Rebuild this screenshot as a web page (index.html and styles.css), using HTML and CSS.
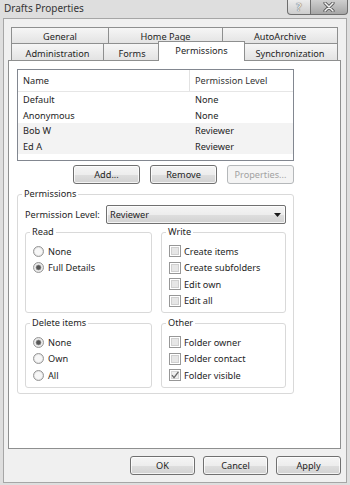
FILE: index.html
```html
<!DOCTYPE html>
<html lang="en">
<head>
    <meta charset="UTF-8">
    <title>Drafts Properties</title>
    <link rel="stylesheet" href="styles.css">
</head>
<body>
    <div class="window">
        <div class="titlebar">
            <span class="title">Drafts Properties</span>
            <div class="caption">
                <span class="cap-btn help">?</span>
                <span class="cap-btn close">
                    <svg width="12" height="10" viewBox="0 0 12 10">
                        <path d="M2 1 L10 9 M10 1 L2 9" stroke="#5a5a5a" stroke-width="3.2" stroke-linecap="round"/>
                        <path d="M2 1 L10 9 M10 1 L2 9" stroke="#f4f4f4" stroke-width="1.5" stroke-linecap="round"/>
                    </svg>
                </span>
            </div>
        </div>

        <div class="client">
            <div class="tabs">
                <div class="tab-row back">
                    <div class="tab t-general">General</div>
                    <div class="tab t-home">Home Page</div>
                    <div class="tab t-archive">AutoArchive</div>
                </div>
                <div class="tab-row front">
                    <div class="tab t-admin">Administration</div>
                    <div class="tab t-forms">Forms</div>
                    <div class="tab active">Permissions</div>
                    <div class="tab t-sync">Synchronization</div>
                </div>
            </div>

            <div class="panel">
                <div class="listbox">
                    <div class="list-head">
                        <span class="col-name">Name</span>
                        <span class="col-level">Permission Level</span>
                    </div>
                    <div class="list-row"><span class="col-name">Default</span><span class="col-level">None</span></div>
                    <div class="list-row"><span class="col-name">Anonymous</span><span class="col-level">None</span></div>
                    <div class="list-row alt"><span class="col-name">Bob W</span><span class="col-level">Reviewer</span></div>
                    <div class="list-row alt"><span class="col-name">Ed A</span><span class="col-level">Reviewer</span></div>
                </div>

                <div class="list-buttons">
                    <button class="btn">Add...</button>
                    <button class="btn">Remove</button>
                    <button class="btn" disabled>Properties...</button>
                </div>

                <fieldset class="group perms">
                    <legend>Permissions</legend>
                    <div class="level-row">
                        <label>Permission Level:</label>
                        <div class="combo">
                            <span>Reviewer</span>
                            <svg width="7" height="4" viewBox="0 0 7 4"><path d="M0 0 H7 L3.5 4 Z" fill="#1a1a1a"/></svg>
                        </div>
                    </div>

                    <div class="group-row">
                        <fieldset class="group sub left">
                            <legend>Read</legend>
                            <div class="option">
                                <svg class="radio" width="11" height="11" viewBox="0 0 11 11"><circle cx="5.5" cy="5.5" r="5" fill="#e4e4e4" stroke="#979797"/><circle cx="5.5" cy="5.5" r="3.6" fill="#f7f7f7"/></svg>
                                <span>None</span>
                            </div>
                            <div class="option">
                                <svg class="radio" width="11" height="11" viewBox="0 0 11 11"><circle cx="5.5" cy="5.5" r="5" fill="#e4e4e4" stroke="#979797"/><circle cx="5.5" cy="5.5" r="3.6" fill="#f7f7f7"/><circle cx="5.5" cy="5.5" r="2.5" fill="#555" stroke="#8a8a8a" stroke-width="0.8"/></svg>
                                <span>Full Details</span>
                            </div>
                        </fieldset>
                        <fieldset class="group sub right">
                            <legend>Write</legend>
                            <div class="option check">
                                <svg width="12" height="12" viewBox="0 0 12 12"><rect x="0.5" y="0.5" width="11" height="11" fill="#fff" stroke="#979797"/><rect x="2.5" y="2.5" width="7" height="7" fill="#e6e6e6" stroke="#cfcfcf"/></svg>
                                <span>Create items</span>
                            </div>
                            <div class="option check">
                                <svg width="12" height="12" viewBox="0 0 12 12"><rect x="0.5" y="0.5" width="11" height="11" fill="#fff" stroke="#979797"/><rect x="2.5" y="2.5" width="7" height="7" fill="#e6e6e6" stroke="#cfcfcf"/></svg>
                                <span>Create subfolders</span>
                            </div>
                            <div class="option check">
                                <svg width="12" height="12" viewBox="0 0 12 12"><rect x="0.5" y="0.5" width="11" height="11" fill="#fff" stroke="#979797"/><rect x="2.5" y="2.5" width="7" height="7" fill="#e6e6e6" stroke="#cfcfcf"/></svg>
                                <span>Edit own</span>
                            </div>
                            <div class="option check">
                                <svg width="12" height="12" viewBox="0 0 12 12"><rect x="0.5" y="0.5" width="11" height="11" fill="#fff" stroke="#979797"/><rect x="2.5" y="2.5" width="7" height="7" fill="#e6e6e6" stroke="#cfcfcf"/></svg>
                                <span>Edit all</span>
                            </div>
                        </fieldset>
                    </div>

                    <div class="group-row">
                        <fieldset class="group sub left">
                            <legend>Delete items</legend>
                            <div class="option">
                                <svg class="radio" width="11" height="11" viewBox="0 0 11 11"><circle cx="5.5" cy="5.5" r="5" fill="#e4e4e4" stroke="#979797"/><circle cx="5.5" cy="5.5" r="3.6" fill="#f7f7f7"/><circle cx="5.5" cy="5.5" r="2.5" fill="#555" stroke="#8a8a8a" stroke-width="0.8"/></svg>
                                <span>None</span>
                            </div>
                            <div class="option">
                                <svg class="radio" width="11" height="11" viewBox="0 0 11 11"><circle cx="5.5" cy="5.5" r="5" fill="#e4e4e4" stroke="#979797"/><circle cx="5.5" cy="5.5" r="3.6" fill="#f7f7f7"/></svg>
                                <span>Own</span>
                            </div>
                            <div class="option">
                                <svg class="radio" width="11" height="11" viewBox="0 0 11 11"><circle cx="5.5" cy="5.5" r="5" fill="#e4e4e4" stroke="#979797"/><circle cx="5.5" cy="5.5" r="3.6" fill="#f7f7f7"/></svg>
                                <span>All</span>
                            </div>
                        </fieldset>
                        <fieldset class="group sub right">
                            <legend>Other</legend>
                            <div class="option check">
                                <svg width="12" height="12" viewBox="0 0 12 12"><rect x="0.5" y="0.5" width="11" height="11" fill="#fff" stroke="#979797"/><rect x="2.5" y="2.5" width="7" height="7" fill="#e6e6e6" stroke="#cfcfcf"/></svg>
                                <span>Folder owner</span>
                            </div>
                            <div class="option check">
                                <svg width="12" height="12" viewBox="0 0 12 12"><rect x="0.5" y="0.5" width="11" height="11" fill="#fff" stroke="#979797"/><rect x="2.5" y="2.5" width="7" height="7" fill="#e6e6e6" stroke="#cfcfcf"/></svg>
                                <span>Folder contact</span>
                            </div>
                            <div class="option check">
                                <svg width="12" height="12" viewBox="0 0 12 12"><rect x="0.5" y="0.5" width="11" height="11" fill="#fff" stroke="#979797"/><rect x="2.5" y="2.5" width="7" height="7" fill="#f0f0f0" stroke="#d8d8d8"/><path d="M3 6.2 L5 8.6 L9.4 2.8" fill="none" stroke="#6a6a6a" stroke-width="1.3"/></svg>
                                <span>Folder visible</span>
                            </div>
                        </fieldset>
                    </div>
                </fieldset>
            </div>

            <div class="dialog-buttons">
                <button class="btn">OK</button>
                <button class="btn">Cancel</button>
                <button class="btn">Apply</button>
            </div>
        </div>
    </div>
</body>
</html>
```

FILE: styles.css
```css
* {
    box-sizing: border-box;
}
body {
    margin: 0;
    width: 350px;
    height: 485px;
    overflow: hidden;
    background: #fff;
    font-family: "Noto Sans", "Open Sans", sans-serif;
    font-size: 9.2px;
    color: #1e1e1e;
}
.window {
    width: 350px;
    height: 485px;
    background: #dedede;
    padding: 0 3px 2px 3px;
    display: flex;
    flex-direction: column;
}
.titlebar {
    height: 18px;
    display: flex;
    justify-content: space-between;
    align-items: flex-start;
}
.title {
    padding: 1px 0 0 1px;
    font-size: 10px;
    line-height: 15px;
    color: #353535;
}
.caption {
    display: flex;
    margin-right: -1px;
}
.cap-btn {
    height: 15px;
    border: 1px solid #6e6e6e;
    border-top: none;
    display: flex;
    align-items: center;
    justify-content: center;
}
.help {
    width: 24px;
    border-radius: 0 0 0 4px;
    background: linear-gradient(#ececec, #cdcdcd);
    font-size: 10px;
    font-weight: bold;
    color: #e6e6e6;
    text-shadow: 0 0 1px #666, 0 0 1px #666;
}
.close {
    width: 38px;
    margin-left: -1px;
    border-radius: 0 0 4px 0;
    background: linear-gradient(#cfcfcf, #a6a6a6);
}
.client {
    flex: 1;
    background: #f0f0f0;
    border: 1px solid #a6a6a6;
    padding: 8px 0 0 4px;
}
.tabs {
    width: 333px;
    display: flex;
    flex-direction: column;
}
.tab-row {
    display: flex;
    padding: 0 3px;
}
.tab {
    border: 1px solid #8e8f8f;
    border-bottom: none;
    margin-left: -1px;
    background: linear-gradient(#f6f6f6, #e3e3e3);
    text-align: center;
    white-space: nowrap;
}
.tab:first-child {
    margin-left: 0;
}
.back .tab {
    height: 16px;
    line-height: 17px;
}
.front .tab {
    height: 17px;
    line-height: 19px;
}
.t-general { width: 98px; }
.t-home { width: 115px; }
.t-archive { width: 116px; }
.t-admin { width: 93px; }
.t-forms { width: 58px; }
.t-sync { width: 96px; }
.front .tab.active {
    position: relative;
    z-index: 1;
    width: 87px;
    height: 20px;
    margin: -2px -2px -1px -3px;
    line-height: 18px;
    background: #fff;
}
.panel {
    width: 333px;
    height: 389px;
    background: #fff;
    border: 1px solid #8e8f8f;
    padding: 8px;
}
.listbox {
    width: 277px;
    height: 92px;
    border: 1px solid #828790;
    background: #fff;
}
.list-head {
    display: flex;
    height: 22px;
    line-height: 21px;
    border-bottom: 1px solid #e6e6e6;
}
.col-name {
    width: 172px;
    padding-left: 5px;
}
.list-head .col-name {
    border-right: 1px solid #e2e2e2;
}
.col-level {
    padding-left: 5px;
}
.list-head .col-level {
    color: #333;
}
.list-row {
    display: flex;
    height: 15.5px;
    line-height: 15.5px;
}
.list-row.alt {
    background: #f3f3f3;
}
.btn {
    height: 19px;
    padding: 0;
    border: 1px solid #707070;
    border-radius: 3px;
    background: linear-gradient(#f5f5f5 0%, #ededed 50%, #dedede 52%, #d2d2d2 100%);
    box-shadow: inset 0 0 0 1px rgba(255, 255, 255, 0.75);
    font: inherit;
    color: inherit;
    line-height: 16px;
    text-align: center;
}
.btn:disabled {
    color: #a2a2a2;
    border-color: #b5b8ba;
    background: #f4f4f4;
    box-shadow: none;
}
.list-buttons {
    width: 277px;
    display: flex;
    justify-content: flex-end;
    gap: 10px;
    margin-top: 4px;
}
.list-buttons .btn {
    width: 67px;
}
.group {
    margin: 0;
    min-width: 0;
    border: 1px solid #d9d9d9;
    border-radius: 3px;
    padding: 5px 7px 3px;
}
.group > legend {
    padding: 0 2px;
    margin-left: -3px;
    line-height: 12px;
}
.perms {
    width: 277px;
    margin-top: 4px;
    padding-bottom: 5px;
}
.level-row {
    display: flex;
    align-items: center;
    height: 19px;
}
.level-row label {
    width: 81px;
}
.combo {
    width: 180px;
    height: 19px;
    display: flex;
    align-items: center;
    justify-content: space-between;
    padding: 0 4px 0 3px;
    border: 1px solid #707070;
    border-radius: 2px;
    background: linear-gradient(#f5f5f5 0%, #ededed 50%, #dedede 52%, #d2d2d2 100%);
    box-shadow: inset 0 0 0 1px rgba(255, 255, 255, 0.75);
}
.group-row {
    display: flex;
    gap: 9px;
    margin-top: 2px;
}
.group-row + .group-row {
    margin-top: 4px;
}
.sub.left {
    width: 127px;
}
.sub.right {
    width: 125px;
}
.option {
    display: flex;
    align-items: center;
    gap: 4px;
    height: 16.5px;
    white-space: nowrap;
}
.option.check {
    gap: 3px;
}
.dialog-buttons {
    width: 333px;
    display: flex;
    justify-content: flex-end;
    gap: 8px;
    margin-top: 7px;
}
.dialog-buttons .btn {
    width: 65px;
}
```
